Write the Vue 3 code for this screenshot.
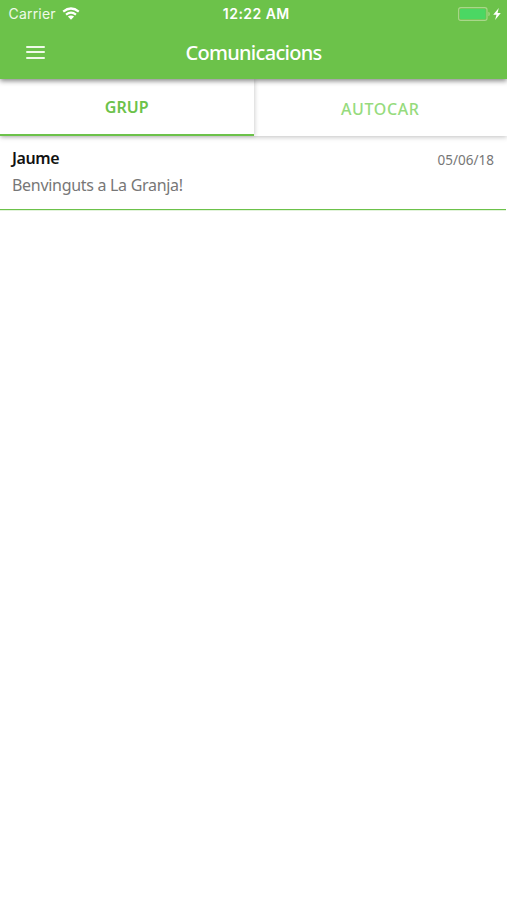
<script setup>
import { ref } from 'vue'

const tabs = [
  { id: 'group', label: 'GRUP' },
  { id: 'coach', label: 'AUTOCAR' },
]
const activeTab = ref('group')
const messages = [
  { id: 1, author: 'Jaume', date: '05/06/18', text: 'Benvinguts a La Granja!' },
]
</script>

<template>
  <main class="screen">
    <header class="header">
      <div class="status">
        <div class="carrier">
          <span>Carrier</span>
          <svg class="wifi" viewBox="0 0 18 13">
            <path d="M1.2 4.7Q9-1.7 16.8 4.7M4 7.6Q9 3.5 14 7.6" fill="none" stroke="#fff" stroke-width="2.2" />
            <path d="M5.9 9.6Q9 7.2 12.1 9.6L9 12.7Z" fill="#fff" />
          </svg>
        </div>
        <span class="clock">12:22 AM</span>
        <div class="power">
          <svg class="battery" viewBox="0 0 32 14">
            <rect x="0.6" y="0.6" width="28.4" height="12.8" rx="2.2" fill="none" stroke="#a9d78b" stroke-width="1.1" />
            <rect x="2" y="2" width="25.6" height="10" rx="1" fill="#4bd763" />
            <path d="M30.4 4.7q1.4 .6 1.4 2.3t-1.4 2.3z" fill="#a9d78b" />
          </svg>
          <svg class="bolt" viewBox="0 0 8 12">
            <path d="M5.8 0L0.2 6.7H3.5L2.1 12L7.8 5H4.5Z" fill="#fff" />
          </svg>
        </div>
      </div>
      <div class="toolbar">
        <button class="menu" aria-label="Menu">
          <span class="bar"></span><span class="bar"></span><span class="bar"></span>
        </button>
        <h1 class="title">Comunicacions</h1>
      </div>
    </header>
    <nav class="tabs">
      <button
        v-for="tab in tabs"
        :key="tab.id"
        class="tab"
        :class="{ active: tab.id === activeTab }"
        @click="activeTab = tab.id"
      >{{ tab.label }}</button>
    </nav>
    <ul class="messages">
      <li v-for="message in messages" :key="message.id" class="message">
        <div class="heading">
          <span class="author">{{ message.author }}</span>
          <span class="date">{{ message.date }}</span>
        </div>
        <p class="text">{{ message.text }}</p>
      </li>
    </ul>
  </main>
</template>

<style>
body {
  background: #fff;
}
</style>

<style scoped>
.screen {
  height: 900px;
  overflow: hidden;
  background: #fff;
  font-family: "Noto Sans", sans-serif;
}
.header {
  position: relative;
  z-index: 2;
  height: 79px;
  background: #6cc24a;
  color: #fff;
  box-shadow: 0 2px 5px rgba(0, 0, 0, 0.48);
}
.status {
  display: grid;
  grid-template-columns: 1fr auto 1fr;
  align-items: center;
  height: 27px;
  padding: 0 6px 0 8.5px;
  font-family: Inter, sans-serif;
  font-size: 14px;
}
.carrier {
  display: flex;
  align-items: center;
  gap: 6px;
  color: #effae9;
  letter-spacing: 0.2px;
}
.wifi {
  width: 18px;
  height: 13px;
}
.clock {
  padding-left: 3px;
  font-weight: 600;
  letter-spacing: 0.45px;
}
.power {
  display: flex;
  align-items: center;
  justify-content: flex-end;
  gap: 3px;
}
.battery {
  width: 32px;
  height: 14px;
}
.bolt {
  width: 8px;
  height: 12px;
}
.toolbar {
  display: grid;
  grid-template-columns: 72px 1fr 72px;
  align-items: center;
  height: 50px;
}
.menu {
  display: flex;
  flex-direction: column;
  gap: 3.5px;
  width: 19px;
  margin-left: 26px;
  padding: 0;
  border: 0;
  background: none;
}
.bar {
  display: block;
  width: 100%;
  height: 2px;
  border-radius: 1px;
  background: #effae9;
}
.title {
  margin: 0;
  padding-top: 1px;
  text-align: center;
  font-size: 20px;
  font-weight: 500;
  line-height: 49px;
  letter-spacing: -0.7px;
}
.tabs {
  position: relative;
  z-index: 1;
  display: flex;
  height: 57px;
  box-shadow: 0 1px 5px rgba(0, 0, 0, 0.25);
}
.tab {
  flex: 1;
  padding: 2px 0 0;
  border: 0;
  background: #fff;
  color: #96db7d;
  font-family: inherit;
  font-size: 16px;
  font-weight: 500;
  letter-spacing: 0.6px;
}
.tab.active {
  position: relative;
  z-index: 1;
  padding-top: 1px;
  border-bottom: 2px solid #6cc24a;
  color: #6cc24a;
  font-weight: 600;
  letter-spacing: 0.1px;
  box-shadow: 1px 0 4px rgba(0, 0, 0, 0.18);
}
.messages {
  margin: 0;
  padding: 0;
  list-style: none;
}
.message {
  box-sizing: border-box;
  height: 74px;
  margin-right: 1px;
  padding: 9px 12px 0;
  border-bottom: 1px solid #6cc24a;
  box-shadow: 0 1px 0 rgba(108, 194, 74, 0.2);
}
.heading {
  display: flex;
  justify-content: space-between;
  height: 27px;
  line-height: 26px;
}
.author {
  color: #111;
  font-size: 16px;
  font-weight: 600;
  letter-spacing: -0.4px;
}
.date {
  padding-top: 2px;
  color: #777;
  font-size: 13.5px;
}
.text {
  margin: 0;
  color: #777;
  font-size: 16px;
  line-height: 26px;
  letter-spacing: -0.3px;
}
</style>
